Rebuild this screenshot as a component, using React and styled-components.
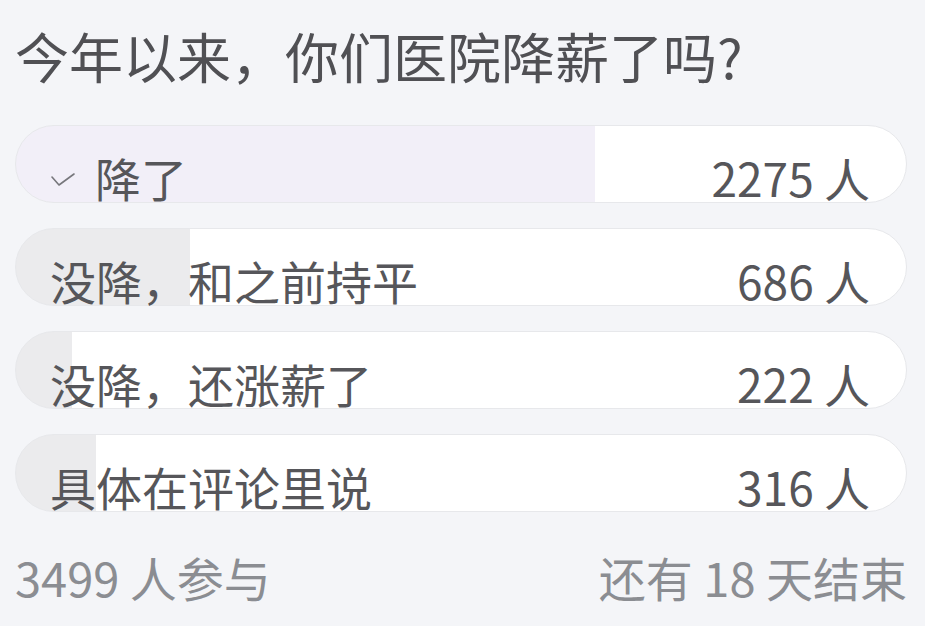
import React from 'react';
import styled, { createGlobalStyle } from 'styled-components';

const GlobalStyle = createGlobalStyle`
  html, body {
    margin: 0;
    padding: 0;
    background: #f4f5f8;
  }
  body {
    font-family: "Noto Sans CJK SC", "Noto Sans", sans-serif;
    color: #535357;
  }
`;

const Card = styled.div`
  width: 925px;
  height: 626px;
  padding: 22px 18px 0 15px;
  box-sizing: border-box;
  overflow: hidden;
`;

const Title = styled.h1`
  margin: 0;
  font-size: 54px;
  font-weight: 400;
  line-height: 68px;
  color: #505054;
`;

const Options = styled.div`
  margin-top: 35px;
  display: flex;
  flex-direction: column;
  gap: 25px;
`;

const Option = styled.div`
  height: 78px;
  box-sizing: border-box;
  border: 1px solid #e7e8eb;
  border-radius: 39px;
  display: flex;
  align-items: flex-end;
  justify-content: space-between;
  padding: 0 36px 0 34px;
  font-size: 46px;
  line-height: 46px;
  color: #56565a;
`;

const Label = styled.span`
  display: flex;
  align-items: center;
  gap: 20px;
  padding-bottom: 2px;
`;

const Count = styled.span`
  padding-bottom: 2px;
`;

const Check = styled.svg`
  width: 24px;
  height: 14px;
  margin: 6px 0 0 1px;
`;

const Footer = styled.div`
  margin-top: 36px;
  display: flex;
  justify-content: space-between;
  font-size: 47px;
  line-height: 58px;
  color: #8b8d92;
`;

const votes = [
  { label: '降了', count: 2275, chosen: true },
  { label: '没降，和之前持平', count: 686 },
  { label: '没降，还涨薪了', count: 222 },
  { label: '具体在评论里说', count: 316 },
];

const total = votes.reduce((sum, v) => sum + v.count, 0);

const App = () => (
  <>
    <GlobalStyle />
    <Card>
      <Title>今年以来，你们医院降薪了吗?</Title>
      <Options>
        {votes.map((v) => {
          const pct = (v.count / total) * 100;
          const fill = v.chosen ? '#f2eff8' : '#ebebed';
          return (
            <Option
              key={v.label}
              style={{
                background: `linear-gradient(to right, ${fill} 0, ${fill} ${pct}%, #ffffff ${pct}%)`,
              }}
            >
              <Label>
                {v.chosen && (
                  <Check viewBox="0 0 24 14" fill="none">
                    <path d="M1 4 L8 12 L23 1" stroke="#77777c" strokeWidth="1.6" strokeLinecap="round" strokeLinejoin="round" />
                  </Check>
                )}
                {v.label}
              </Label>
              <Count>{v.count} 人</Count>
            </Option>
          );
        })}
      </Options>
      <Footer>
        <span>{total} 人参与</span>
        <span>还有 18 天结束</span>
      </Footer>
    </Card>
  </>
);

export default App;
